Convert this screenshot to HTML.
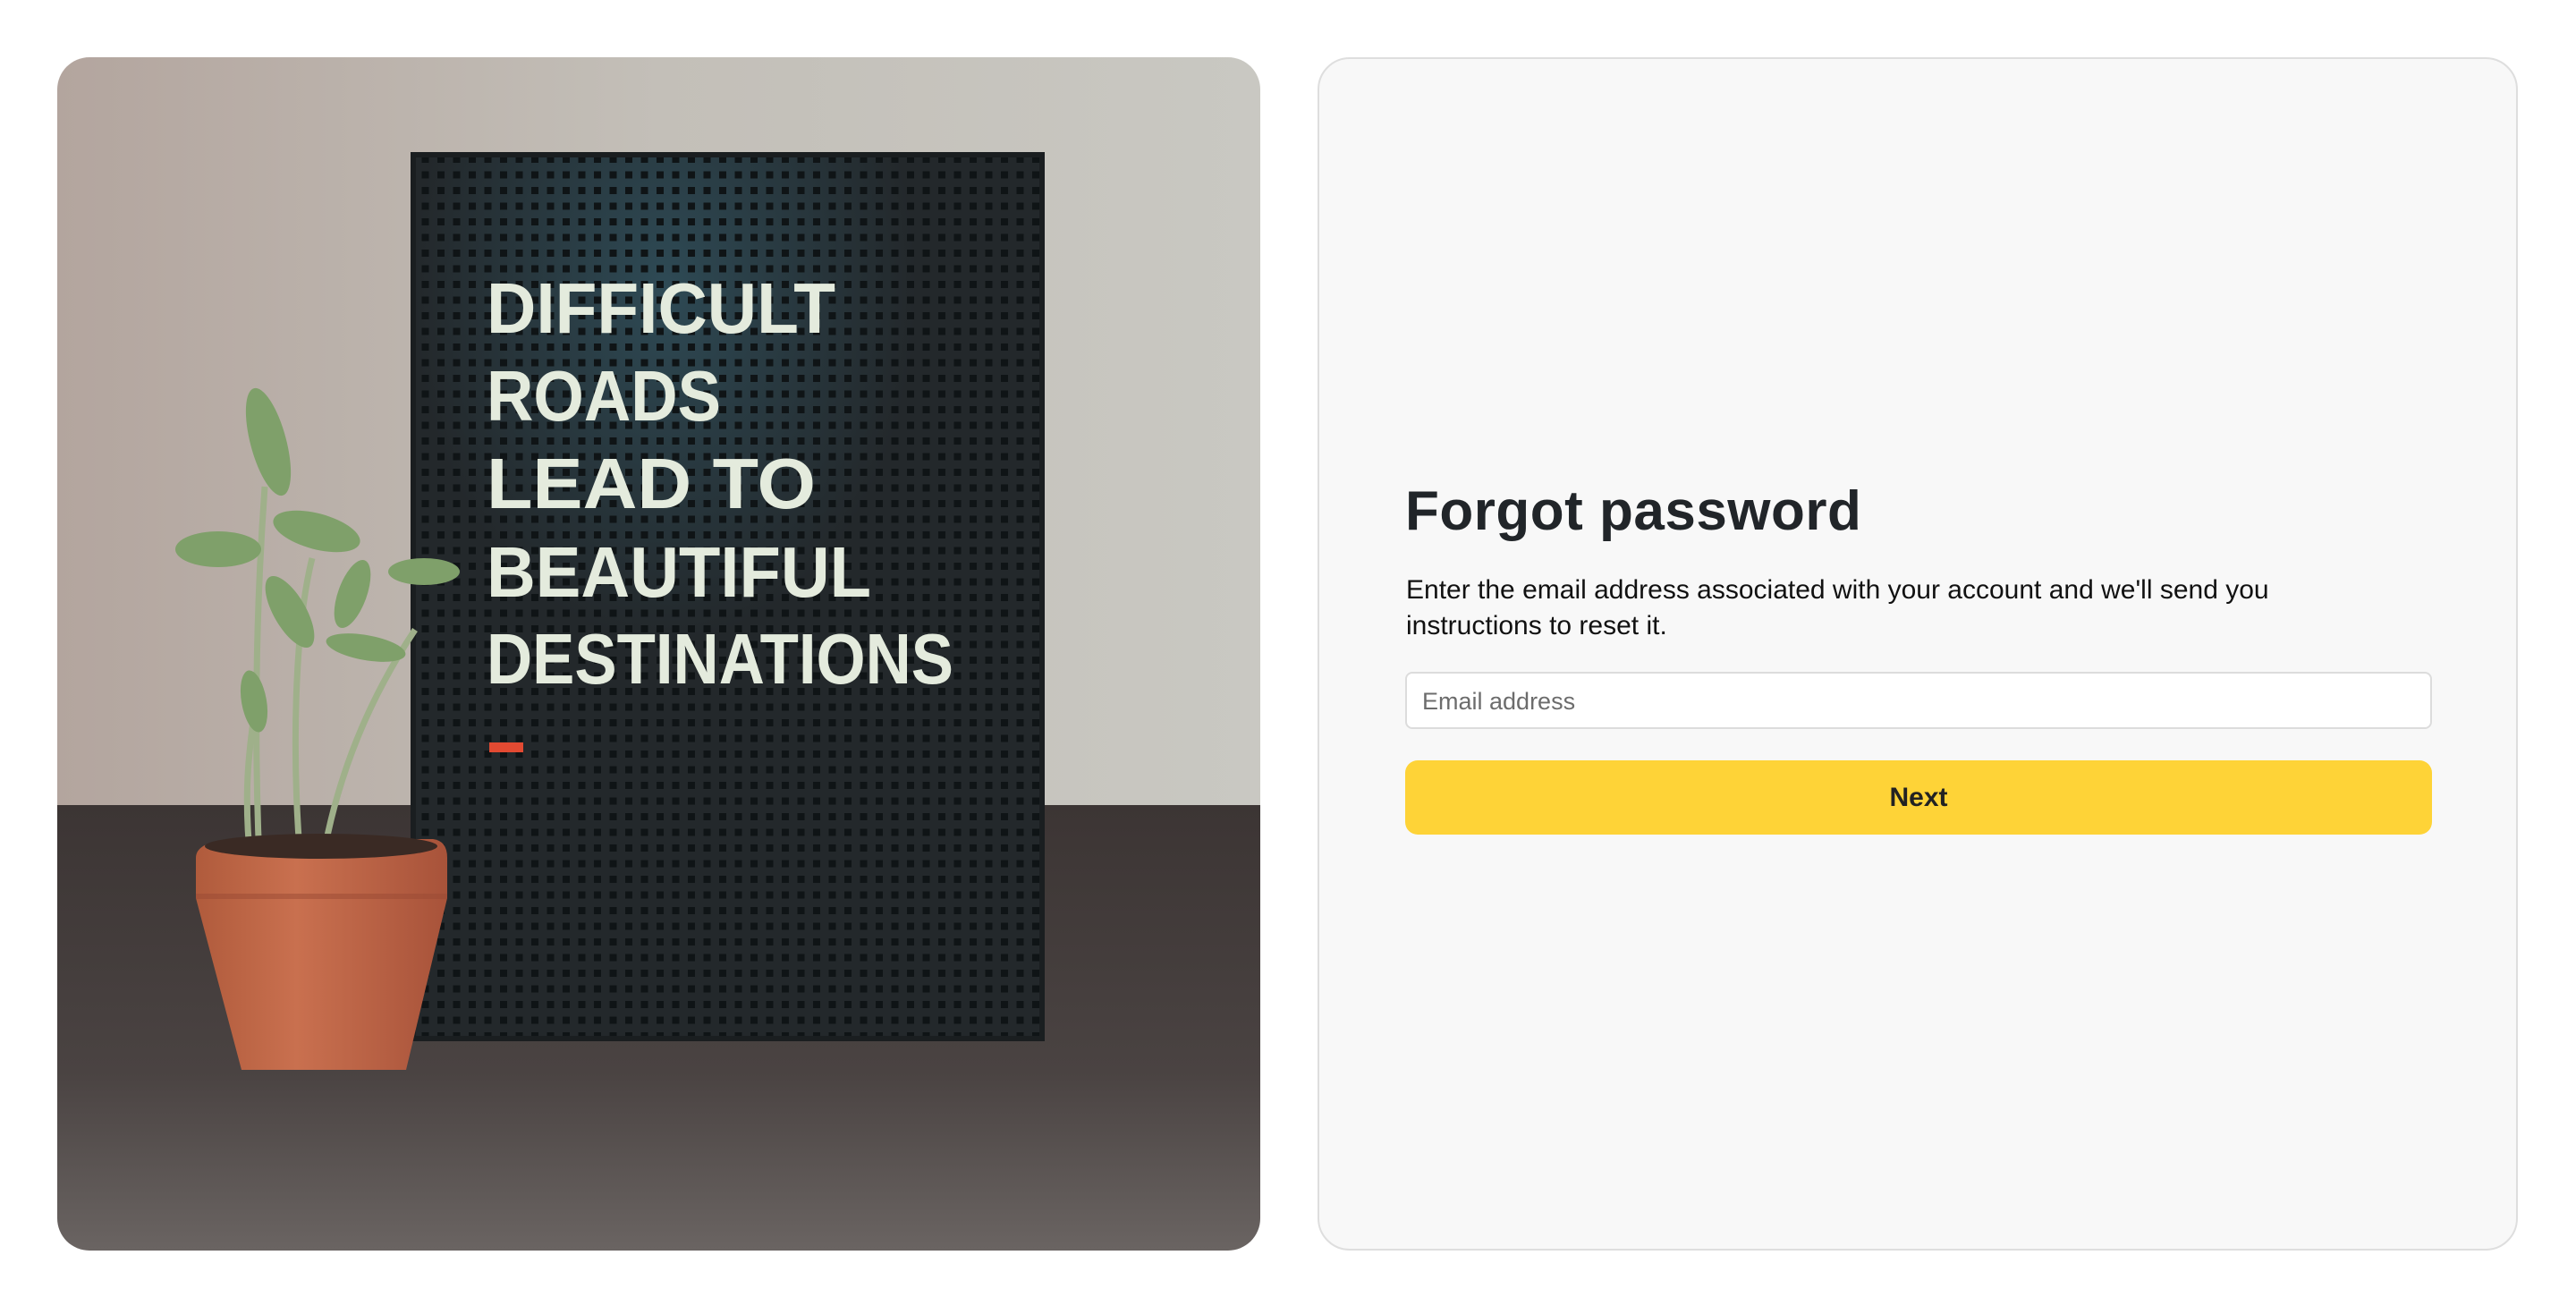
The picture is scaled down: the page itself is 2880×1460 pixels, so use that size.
<!DOCTYPE html>
<html><head><meta charset="utf-8"><style>
html,body{margin:0;padding:0;background:#fff;width:2880px;height:1460px;overflow:hidden;font-family:"Liberation Sans",sans-serif}
.left{position:absolute;left:64px;top:64px;width:1345px;height:1334px;border-radius:36px;overflow:hidden}
.right{position:absolute;left:1473px;top:64px;width:1338px;height:1330px;border:2px solid #dedede;border-radius:36px;background:#f8f8f8}
h1{position:absolute;left:96px;top:470px;margin:0;font-size:62px;font-weight:bold;color:#212529;letter-spacing:0.5px}
p{position:absolute;left:97px;top:574px;margin:0;width:1110px;font-size:30px;line-height:40px;color:#111}
.inp{position:absolute;left:96px;top:685px;width:1148px;height:64px;border:2px solid #dcdcdc;border-radius:8px;background:#fff;box-sizing:border-box}
.inp span{position:absolute;left:17px;top:16px;font-size:27px;color:#6c6c6c}
.btn{position:absolute;left:96px;top:784px;width:1148px;height:83px;border-radius:14px;background:#fed337;text-align:center;line-height:83px;font-size:30px;font-weight:bold;color:#222}
</style></head><body>
<div class="left">
<svg width="1345" height="1334" viewBox="0 0 1345 1334">
<defs>
<linearGradient id="wall" x1="0" y1="0" x2="1" y2="0"><stop offset="0" stop-color="#b3a59e"/><stop offset="0.5" stop-color="#c3bfb8"/><stop offset="1" stop-color="#c9c8c2"/></linearGradient>
<linearGradient id="table" x1="0" y1="0" x2="0" y2="1"><stop offset="0" stop-color="#3c3534"/><stop offset="0.6" stop-color="#4a4342"/><stop offset="1" stop-color="#6a6462"/></linearGradient>
<pattern id="holes" x="0" y="0" width="17.5" height="17.5" patternUnits="userSpaceOnUse"><rect x="5" y="5" width="8" height="8" fill="#0f1416"/></pattern>
<radialGradient id="glow" cx="0.4" cy="0.15" r="0.4"><stop offset="0" stop-color="#2e4a55"/><stop offset="1" stop-color="#23282b"/></radialGradient>
<linearGradient id="pot" x1="0" y1="0" x2="1" y2="0"><stop offset="0" stop-color="#b05b3c"/><stop offset="0.4" stop-color="#c9704f"/><stop offset="1" stop-color="#a8533a"/></linearGradient>
</defs>
<rect width="1345" height="840" fill="url(#wall)"/>
<rect y="836" width="1345" height="498" fill="url(#table)"/>
<rect x="398" y="109" width="703" height="988" fill="url(#glow)"/>
<rect x="398" y="109" width="703" height="988" fill="url(#holes)"/>
<rect x="398" y="109" width="703" height="988" fill="none" stroke="#1a1e20" stroke-width="6"/>
<g font-family="Liberation Sans" font-weight="bold" font-size="80" fill="#e4ebdd">
<text x="480" y="308" textLength="390" lengthAdjust="spacingAndGlyphs">DIFFICULT</text>
<text x="480" y="406" textLength="262" lengthAdjust="spacingAndGlyphs">ROADS</text>
<text x="480" y="504" textLength="368" lengthAdjust="spacingAndGlyphs">LEAD  TO</text>
<text x="480" y="603" textLength="430" lengthAdjust="spacingAndGlyphs">BEAUTIFUL</text>
<text x="480" y="700" textLength="522" lengthAdjust="spacingAndGlyphs">DESTINATIONS</text>
</g>
<rect x="483" y="766" width="38" height="11" fill="#e24a32"/>
<g stroke="#9fb08a" stroke-width="7" fill="none">
<path d="M226 900 C220 760 222 620 232 480"/><path d="M272 900 C262 780 265 640 285 560"/><path d="M216 900 C208 820 214 780 222 720"/><path d="M300 880 C320 780 360 700 400 640"/>
</g>
<g fill="#7fa06a">
<ellipse cx="236" cy="430" rx="20" ry="62" transform="rotate(-15 236 430)"/>
<ellipse cx="180" cy="550" rx="48" ry="20"/><ellipse cx="290" cy="530" rx="50" ry="20" transform="rotate(15 290 530)"/>
<ellipse cx="330" cy="600" rx="16" ry="40" transform="rotate(20 330 600)"/>
<ellipse cx="260" cy="620" rx="18" ry="45" transform="rotate(-30 260 620)"/>
<ellipse cx="410" cy="575" rx="40" ry="15"/><ellipse cx="345" cy="660" rx="45" ry="14" transform="rotate(10 345 660)"/>
<ellipse cx="220" cy="720" rx="14" ry="35" transform="rotate(-10 220 720)"/>
</g>
<path d="M155 895 Q155 876 200 874 L420 874 Q436 876 436 895 L436 940 L390 1132 L206 1132 L155 940 Z" fill="url(#pot)"/>
<ellipse cx="295" cy="882" rx="130" ry="14" fill="#3a2a24"/>
<rect x="155" y="935" width="281" height="6" fill="#9a4a33" opacity="0.5"/>
</svg>
</div>
<div class="right">
<h1>Forgot password</h1>
<p>Enter the email address associated with your account and we'll send you instructions to reset it.</p>
<div class="inp"><span>Email address</span></div>
<div class="btn">Next</div>
</div>
</body></html>
